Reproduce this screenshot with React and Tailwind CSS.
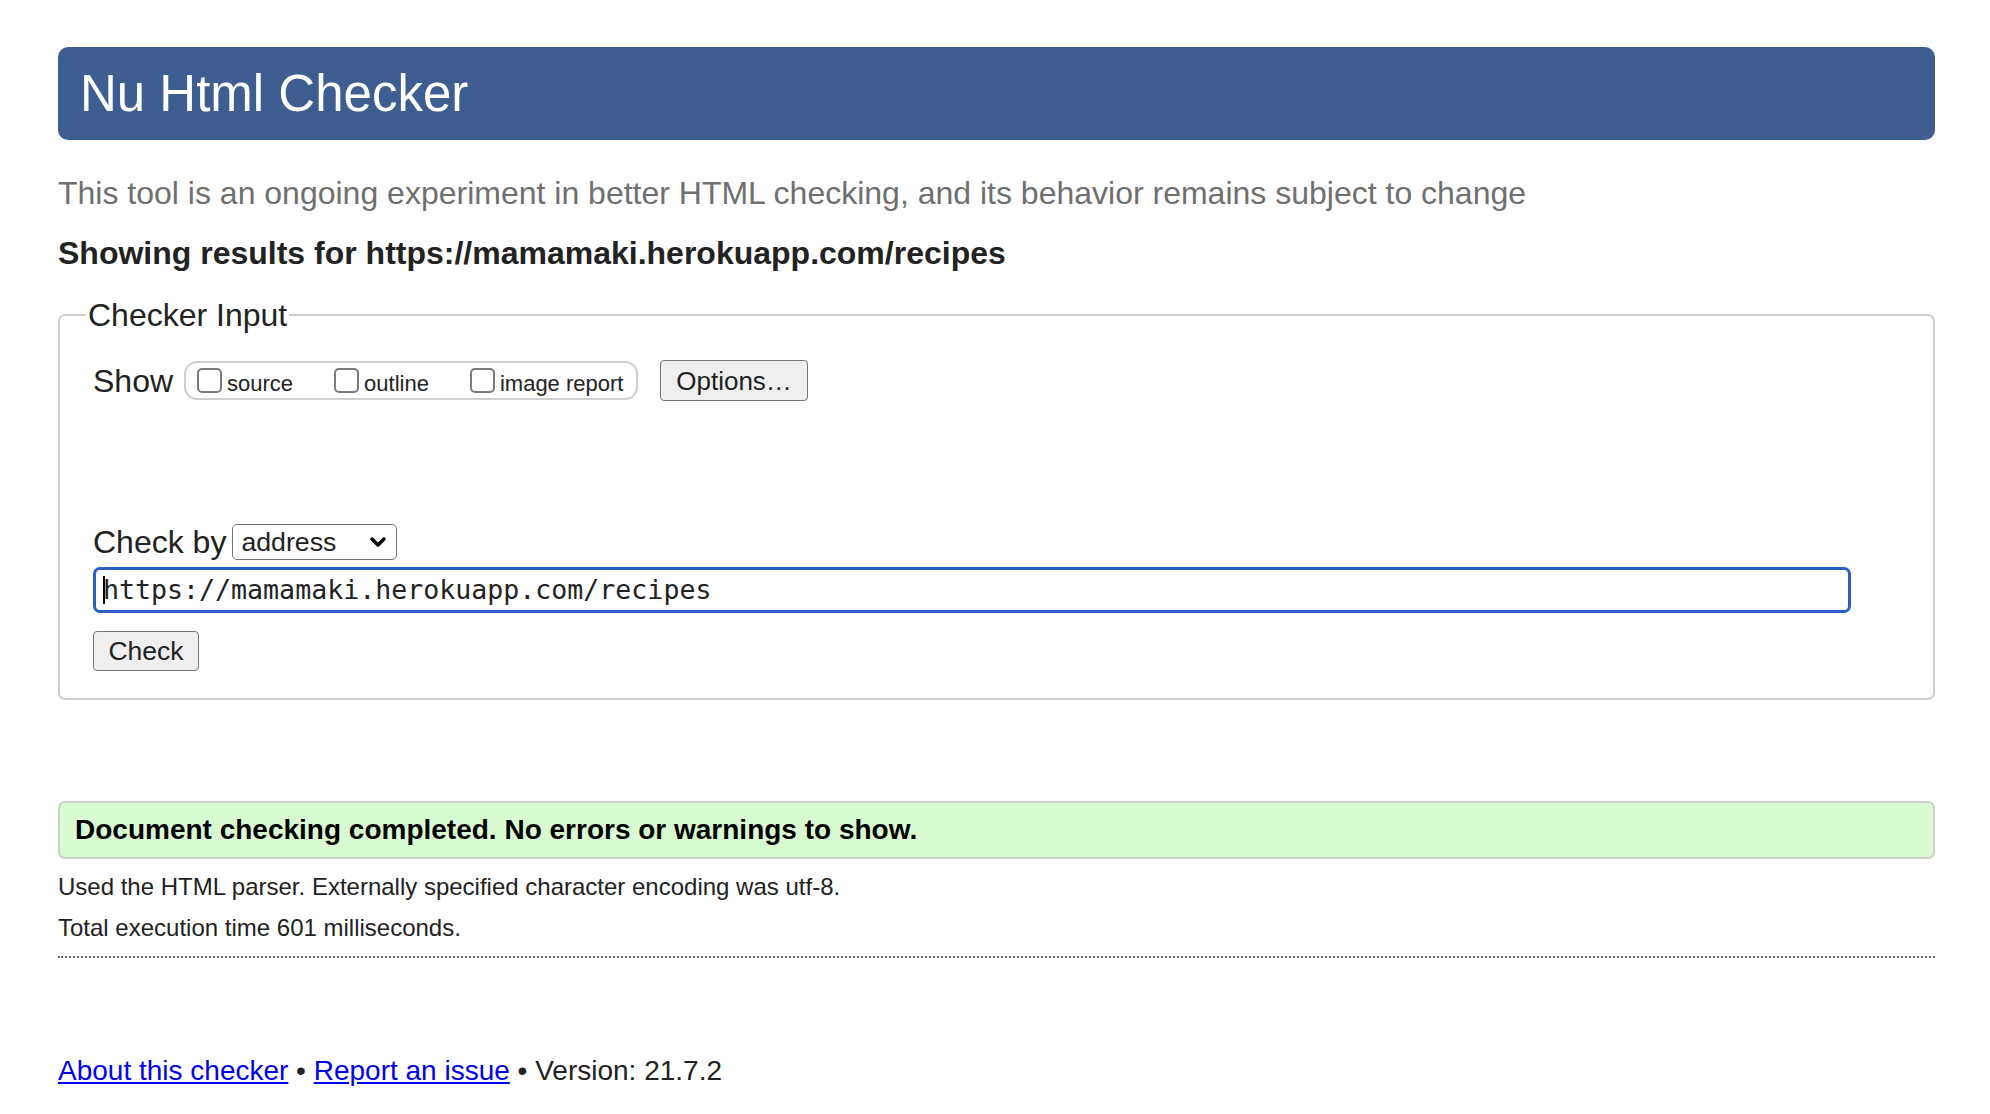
import { ChevronDown } from 'lucide-react'

const SHOW_OPTIONS = ['source', 'outline', 'image report']

function Checkbox({ label }) {
  return (
    <label className="flex items-center gap-[5px]">
      <span className="h-[25px] w-[25px] shrink-0 rounded-[5px] border-2 border-[#7a7a7a] bg-white" />
      <span className="pt-[6px] text-[22px] leading-none">{label}</span>
    </label>
  )
}

export default function App() {
  return (
    <div className="min-h-screen bg-white pl-[58px] pr-[55px] pt-[47px] pb-[40px] font-['Liberation_Sans',Arial,sans-serif] text-[#222]">
      {/* header */}
      <header className="flex h-[93px] items-center rounded-[10px] bg-[#3e5e92] pl-[22px]">
        <h1 className="text-[51px] leading-none text-white">Nu Html Checker</h1>
      </header>

      <p className="mt-[33px] text-[32px] leading-[40px] text-[#6f6f6f]">
        This tool is an ongoing experiment in better HTML checking, and its behavior remains subject to change
      </p>

      <h2 className="mt-[20px] text-[32px] font-bold leading-[40px]">
        Showing results for https://mamamaki.herokuapp.com/recipes
      </h2>

      {/* checker input */}
      <fieldset className="mt-[22px] rounded-[7px] border-2 border-[#cfcfcf] pl-[26px] pr-[26px] pb-[27px]">
        <legend className="px-[2px] text-[32px] leading-[40px]">Checker Input</legend>
        <div className="pl-[7px]">
          <div className="mt-[25px] flex h-[41px] items-center">
            <span className="text-[32px] leading-none">Show</span>
            <div className="ml-[11px] flex h-[39px] w-[454px] items-center gap-[41px] rounded-[13px] border-2 border-[#cfcfcf] pl-[11px]">
              {SHOW_OPTIONS.map((opt) => (
                <Checkbox key={opt} label={opt} />
              ))}
            </div>
            <button
              type="button"
              className="ml-[22px] h-[41px] w-[148px] rounded-[4px] border-[1.5px] border-[#767676] bg-[#efefef] text-[26px] leading-none"
            >
              Options…
            </button>
          </div>

          <div className="mt-[123px] flex h-[36px] items-center">
            <span className="text-[32px] leading-none">Check by</span>
            <div className="ml-[6px] flex h-[36px] w-[165px] items-center justify-between rounded-[5px] border-[1.5px] border-[#767676] bg-white pl-[8px] pr-[6px]">
              <span className="text-[26.7px] leading-none">address</span>
              <ChevronDown size={24} strokeWidth={3.5} className="text-black" />
            </div>
          </div>

          <div className="mt-[7px] flex h-[46px] w-[1758px] items-center rounded-[7px] border-[3px] border-[#2a5dc6] pl-[7px]">
            <span className="h-[28px] w-[2px] bg-black" />
            <span className="-ml-[2px] font-['DejaVu_Sans_Mono',monospace] text-[26.6px] leading-none">
              https://mamamaki.herokuapp.com/recipes
            </span>
          </div>

          <button
            type="button"
            className="mt-[18px] block h-[40px] w-[106px] rounded-[4px] border-[1.5px] border-[#767676] bg-[#efefef] text-[26.5px] leading-none"
          >
            Check
          </button>
        </div>
      </fieldset>

      {/* result */}
      <div className="mt-[101px] flex h-[58px] items-center rounded-[7px] border-2 border-[#cfcfcf] bg-[#d9fbd1] pl-[15px]">
        <p className="text-[28px] font-bold leading-none text-black">
          Document checking completed. No errors or warnings to show.
        </p>
      </div>

      <p className="mt-[13px] text-[24px] leading-[30px]">
        Used the HTML parser. Externally specified character encoding was utf-8.
      </p>
      <p className="mt-[11px] text-[24px] leading-[30px]">Total execution time 601 milliseconds.</p>

      <hr className="mt-[13px] border-0 border-t-2 border-dotted border-[#6a6a6a]" />

      <footer className="mt-[95px] text-[28px] leading-[36px]">
        <a href="#" className="text-[#0000ee] underline">About this checker</a>
        {' • '}
        <a href="#" className="text-[#0000ee] underline">Report an issue</a>
        {' • Version: 21.7.2'}
      </footer>
    </div>
  )
}
